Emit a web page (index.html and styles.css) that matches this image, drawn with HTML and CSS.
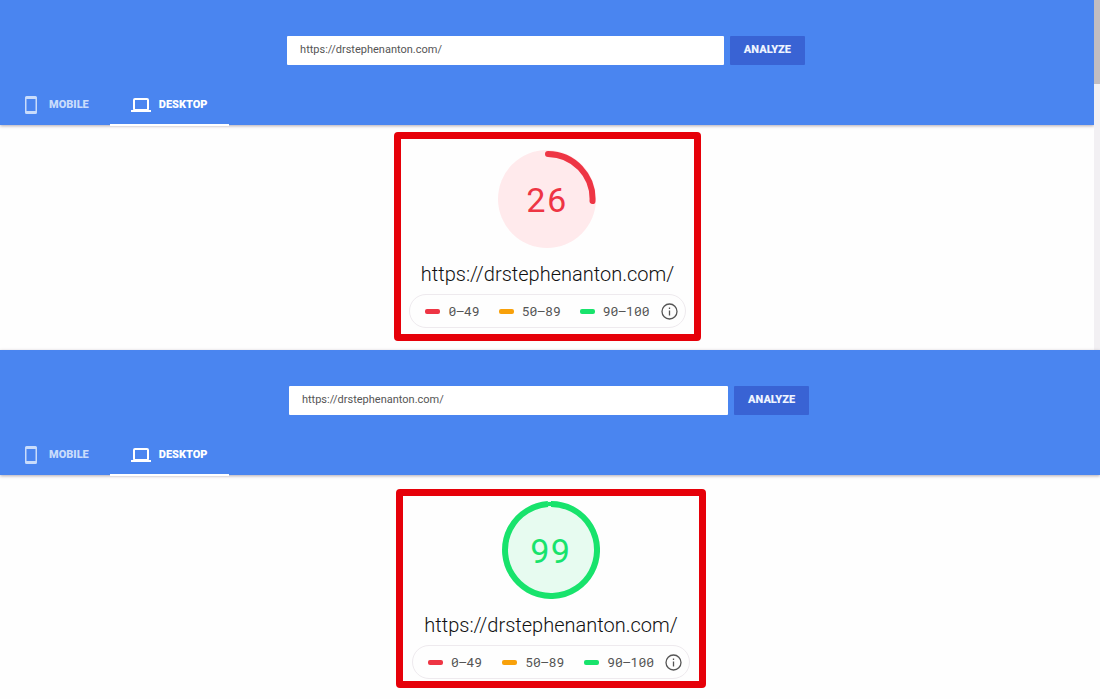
FILE: index.html
```html
<!DOCTYPE html>
<html lang="en">
<head>
    <meta charset="UTF-8">
    <meta name="viewport" content="width=device-width, initial-scale=1.0">
    <title>PageSpeed Insights</title>
    <link rel="stylesheet" href="styles.css">
</head>
<body>
    <section class="panel before">
        <div class="page">
            <header class="header">
                <form class="search">
                    <input type="text" class="url-input" aria-label="Web page URL" value="https://drstephenanton.com/">
                    <button type="submit" class="analyze">ANALYZE</button>
                </form>
                <div class="tabs" role="tablist">
                    <button class="tab" role="tab" aria-selected="false">
                        <svg class="tab-icon" viewBox="0 0 20 20" aria-hidden="true">
                            <path fill="currentColor" fill-rule="evenodd" d="M5.500 1h9A1.500 1.500 0 0 1 16 2.500v15a1.500 1.500 0 0 1-1.500 1.500h-9A1.500 1.500 0 0 1 4 17.500v-15A1.500 1.500 0 0 1 5.500 1zM5.500 4v12h9V4z"/>
                        </svg>
                        MOBILE
                    </button>
                    <button class="tab active" role="tab" aria-selected="true">
                        <svg class="tab-icon" viewBox="0 0 20 20" aria-hidden="true">
                            <rect x="3" y="4" width="14" height="11" rx="1" fill="none" stroke="currentColor" stroke-width="2"/>
                            <path fill="currentColor" d="M0 15h20v2H0z"/>
                        </svg>
                        DESKTOP
                    </button>
                </div>
            </header>
            <main class="content">
                <div class="result">
                    <svg class="gauge fail" viewBox="0 0 98 98" role="img" aria-label="Score 26">
                        <circle class="gauge-base" cx="49" cy="49" r="49"/>
                        <path class="gauge-arc" d="M50 4A45 45 0 0 1 94.500 51"/>
                        <text class="gauge-score" x="49" y="62">26</text>
                    </svg>
                    <h2 class="site">https://drstephenanton.com/</h2>
                    <div class="legend">
                        <span class="range fail"><span class="label">0–49</span></span>
                        <span class="range average"><span class="label">50–89</span></span>
                        <span class="range pass"><span class="label">90–100</span></span>
                        <svg class="info" viewBox="0 0 17 17" role="img" aria-label="Info">
                            <circle cx="8.5" cy="8.5" r="7.5" fill="none" stroke="currentColor" stroke-width="1.3"/>
                            <path d="M8.500 7.500v5M8.500 4.500v1.500" stroke="currentColor" stroke-width="1.3"/>
                        </svg>
                    </div>
                </div>
            </main>
        </div>
        <div class="scrollbar" aria-hidden="true">
            <div class="thumb"></div>
        </div>
    </section>

    <section class="panel after">
        <div class="page">
            <header class="header">
                <form class="search">
                    <input type="text" class="url-input" aria-label="Web page URL" value="https://drstephenanton.com/">
                    <button type="submit" class="analyze">ANALYZE</button>
                </form>
                <div class="tabs" role="tablist">
                    <button class="tab" role="tab" aria-selected="false">
                        <svg class="tab-icon" viewBox="0 0 20 20" aria-hidden="true">
                            <path fill="currentColor" fill-rule="evenodd" d="M5.500 1h9A1.500 1.500 0 0 1 16 2.500v15a1.500 1.500 0 0 1-1.500 1.500h-9A1.500 1.500 0 0 1 4 17.500v-15A1.500 1.500 0 0 1 5.500 1zM5.500 4v12h9V4z"/>
                        </svg>
                        MOBILE
                    </button>
                    <button class="tab active" role="tab" aria-selected="true">
                        <svg class="tab-icon" viewBox="0 0 20 20" aria-hidden="true">
                            <rect x="3" y="4" width="14" height="11" rx="1" fill="none" stroke="currentColor" stroke-width="2"/>
                            <path fill="currentColor" d="M0 15h20v2H0z"/>
                        </svg>
                        DESKTOP
                    </button>
                </div>
            </header>
            <main class="content">
                <div class="result">
                    <svg class="gauge pass" viewBox="0 0 98 98" role="img" aria-label="Score 99">
                        <circle class="gauge-base" cx="49" cy="49" r="49"/>
                        <path class="gauge-arc" d="M49 3A46 46 0 1 1 46 3.100"/>
                        <path class="gauge-gap" d="M47.500 1v4"/>
                        <text class="gauge-score" x="48" y="62">99</text>
                    </svg>
                    <h2 class="site">https://drstephenanton.com/</h2>
                    <div class="legend">
                        <span class="range fail"><span class="label">0–49</span></span>
                        <span class="range average"><span class="label">50–89</span></span>
                        <span class="range pass"><span class="label">90–100</span></span>
                        <svg class="info" viewBox="0 0 17 17" role="img" aria-label="Info">
                            <circle cx="8.5" cy="8.5" r="7.5" fill="none" stroke="currentColor" stroke-width="1.3"/>
                            <path d="M8.500 7.500v5M8.500 4.500v1.500" stroke="currentColor" stroke-width="1.3"/>
                        </svg>
                    </div>
                </div>
            </main>
        </div>
    </section>
</body>
</html>
```
FILE: styles.css
```css
* {
    box-sizing: border-box;
}

body {
    margin: 0;
    font-family: Roboto, "Liberation Sans", sans-serif;
    background-color: #fefefe;
}

.panel {
    display: flex;
}

.page {
    flex: 1;
}

.header {
    padding-top: 36px;
    background-color: #4a85f0;
    box-shadow: 0 1px 3px rgba(60, 40, 60, 0.4);
}

.search {
    display: flex;
    justify-content: center;
    gap: 6px;
    padding-right: 2px;
    margin-bottom: 20px;
}

.url-input {
    width: 40%;
    height: 29px;
    padding: 0 13px 2px;
    border: none;
    border-radius: 1px;
    background-color: #fff;
    color: #555;
    font-family: inherit;
    font-size: 11px;
}

.analyze {
    width: 75px;
    padding: 0 0 2px;
    border: none;
    border-radius: 1px;
    background-color: #3963d4;
    color: #eef3ff;
    font-family: inherit;
    font-size: 11px;
    font-weight: 900;
    cursor: pointer;
}

.tabs {
    display: flex;
}

.tab {
    display: flex;
    align-items: center;
    gap: 8px;
    height: 41px;
    margin-bottom: -1px;
    padding: 0 21px;
    border: none;
    border-bottom: 2px solid transparent;
    background: none;
    color: #c9dcfb;
    font-family: inherit;
    font-size: 11px;
    font-weight: 900;
    cursor: pointer;
}

.tab.active {
    border-bottom-color: #fff;
    color: #fff;
}

.tab-icon {
    width: 20px;
    height: 20px;
}

.content {
    display: flex;
    justify-content: center;
    padding: 7px 0 9px 1px;
}

.result {
    display: flex;
    flex-direction: column;
    align-items: center;
    padding: 11px 8px 6px;
    border: 7px solid #e60009;
    border-radius: 4px;
}

.after .content {
    padding: 14px 0 11px 2px;
}

.after .result {
    padding: 5px 9px 2px;
}

.fail {
    color: #ee3544;
}

.average {
    color: #f8a10b;
}

.pass {
    color: #18e36c;
}

.gauge {
    width: 98px;
    height: 98px;
}

.gauge-base {
    fill: #ffeaec;
}

.pass .gauge-base {
    fill: #e7fbf0;
}

.gauge-arc {
    fill: none;
    stroke: currentColor;
    stroke-width: 6px;
    stroke-linecap: round;
}

.pass .gauge-arc {
    stroke-linecap: butt;
}

.gauge-gap {
    stroke: currentColor;
    stroke-width: 3px;
}

.gauge-score {
    fill: currentColor;
    font-family: "Roboto Mono", Roboto, monospace;
    font-size: 34px;
    text-anchor: middle;
}

.site {
    margin: 12px 0 6px;
    color: #111;
    font-size: 20px;
    font-weight: 300;
    line-height: 28px;
}

.legend {
    display: flex;
    align-items: center;
    height: 34px;
    padding: 0 7px 0 15px;
    border: 1px solid #eeeaee;
    border-radius: 17px;
}

.range {
    display: flex;
    align-items: center;
    gap: 8px;
    margin-right: 19px;
    font-family: "Roboto Mono", "Liberation Mono", monospace;
    font-size: 13px;
}

.after .range {
    margin-right: 20px;
}

.range::before {
    content: "";
    width: 15px;
    height: 5px;
    border-radius: 2px;
    background-color: currentColor;
}

.range .label {
    color: #555;
}

.legend .range:nth-child(3) {
    margin-right: 11px;
}

.info {
    width: 17px;
    height: 17px;
    color: #555;
}

.scrollbar {
    width: 6px;
    background-color: #f2f0f3;
}

.thumb {
    height: 84px;
    background-color: #c2bdc1;
}
```
